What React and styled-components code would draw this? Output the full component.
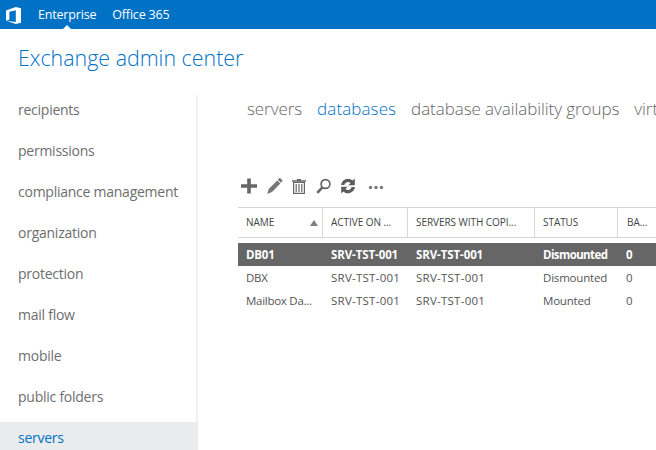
import React from 'react';
import styled, { createGlobalStyle } from 'styled-components';

const Global = createGlobalStyle`
  html, body { margin: 0; padding: 0; height: 100%; overflow: hidden; background: #fff; }
  body { font-family: "Open Sans", "Noto Sans", "Liberation Sans", sans-serif; }
`;

const Page = styled.div`
  width: 656px;
  height: 450px;
  overflow: hidden;
  display: flex;
  flex-direction: column;
`;

const TopBar = styled.div`
  height: 29px;
  flex: none;
  background: #0072c6;
  display: flex;
  align-items: center;
  padding-left: 6px;
  color: #fff;
`;

const TopLink = styled.span`
  position: relative;
  font-size: 12.5px;
  line-height: 17px;
  letter-spacing: -0.18px;
  margin-right: 16px;
  ${(p) => p.$active && `
    &::after {
      content: "";
      position: absolute;
      left: 50%;
      bottom: -6px;
      margin-left: -4px;
      border-left: 4px solid transparent;
      border-right: 4px solid transparent;
      border-bottom: 4px solid #fff;
    }
  `}
`;

const Logo = styled.svg`
  width: 16px;
  height: 17px;
  margin-top: 1px;
  margin-right: 16px;
`;

const Title = styled.h1`
  margin: 0;
  height: 66px;
  flex: none;
  box-sizing: border-box;
  padding: 14px 0 0 18px;
  font-size: 21.4px;
  line-height: 30px;
  font-weight: 300;
  color: #0072c6;
`;

const Body = styled.div`
  flex: 1;
  display: flex;
  min-height: 0;
`;

const Sidebar = styled.nav`
  width: 198px;
  flex: none;
  box-sizing: border-box;
  border-right: 2px solid #f1f1f2;
  display: flex;
  flex-direction: column;
`;

const NavItem = styled.div`
  height: ${(p) => (p.$active ? '42px' : '41px')};
  flex: none;
  padding: 0 0 0 18px;
  margin-top: ${(p) => (p.$active ? '-1px' : '0')};
  margin-right: ${(p) => (p.$active ? '-2px' : '0')};
  background: ${(p) => (p.$active ? '#eaebed' : 'transparent')};
  color: ${(p) => (p.$active ? '#0072c6' : '#6e6e6e')};
  font-size: 14px;
  line-height: ${(p) => (p.$active ? '32px' : '30px')};
  letter-spacing: -0.25px;
`;

const Main = styled.div`
  flex: 1;
  min-width: 0;
  overflow: hidden;
`;

const Tabs = styled.div`
  display: flex;
  gap: 15px;
  padding: 0 0 0 49px;
  height: 78px;
  white-space: nowrap;
`;

const Tab = styled.span`
  font-size: 17px;
  font-weight: 300;
  line-height: 28px;
  letter-spacing: ${(p) => (p.$active ? '0.1px' : '-0.07px')};
  color: ${(p) => (p.$active ? '#0072c6' : '#666')};
`;

const Toolbar = styled.div`
  display: flex;
  align-items: center;
  gap: 9.5px;
  height: 26px;
  padding-left: 43px;
`;

const IconBtn = styled.svg`
  width: ${(p) => p.$w || 16}px;
  height: 18px;
  margin-right: ${(p) => p.$after || 0}px;
  flex: none;
  display: block;
`;

const Table = styled.div`
  margin: 8px 0 0 40px;
  width: 430px;
`;

const columns = '85px 85px 127px 83px 1fr';

const HeadRow = styled.div`
  display: grid;
  grid-template-columns: ${columns};
  height: 31px;
  box-sizing: border-box;
  border-top: 1px solid #d6d6d6;
  border-bottom: 1px solid #d6d6d6;
  margin-bottom: 5px;
  align-items: stretch;
`;

const HeadCell = styled.div`
  position: relative;
  box-sizing: border-box;
  padding-left: 8px;
  font-size: 10px;
  line-height: 28px;
  letter-spacing: -0.05px;
  color: #444;
  white-space: nowrap;
  overflow: hidden;
  border-right: 1px solid #d6d6d6;
  &:last-child { border-right: 0; padding-left: 9px; }
`;

const SortArrow = styled.span`
  position: absolute;
  right: 4px;
  top: 12px;
  border-left: 4px solid transparent;
  border-right: 4px solid transparent;
  border-bottom: 6px solid #7a7f7a;
`;

const Row = styled.div`
  display: grid;
  grid-template-columns: ${columns};
  height: 23px;
  align-items: center;
  background: ${(p) => (p.$selected ? '#666' : 'transparent')};
  color: ${(p) => (p.$selected ? '#fff' : '#555')};
  font-weight: ${(p) => (p.$selected ? 700 : 400)};
`;

const Cell = styled.div`
  padding-left: 8px;
  font-size: 11.5px;
  letter-spacing: ${(p) => p.$track || '-0.2px'};
  white-space: nowrap;
  overflow: hidden;
`;

const navItems = ['recipients', 'permissions', 'compliance management', 'organization', 'protection', 'mail flow', 'mobile', 'public folders'];

const rows = [
  { name: 'DB01', active: 'SRV-TST-001', servers: 'SRV-TST-001', status: 'Dismounted', bad: '0', selected: true },
  { name: 'DBX', active: 'SRV-TST-001', servers: 'SRV-TST-001', status: 'Dismounted', bad: '0' },
  { name: 'Mailbox Da...', active: 'SRV-TST-001', servers: 'SRV-TST-001', status: 'Mounted', bad: '0' },
];

export default function App() {
  return (
    <Page>
      <Global />
      <TopBar>
        <Logo viewBox="0 0 16 17">
          <path fill="#fff" d="M0 3.400 9.800 0 15 1.300v14.500L9.800 17 0 13.800l9.800 1.200V3.300L3.400 4.800v7.700L0 13.800z" />
        </Logo>
        <TopLink $active>Enterprise</TopLink>
        <TopLink>Office 365</TopLink>
      </TopBar>
      <Title>Exchange admin center</Title>
      <Body>
        <Sidebar>
          {navItems.map((n) => <NavItem key={n}>{n}</NavItem>)}
          <NavItem $active>servers</NavItem>
        </Sidebar>
        <Main>
          <Tabs>
            <Tab>servers</Tab>
            <Tab $active>databases</Tab>
            <Tab>database availability groups</Tab>
            <Tab>virtual directories</Tab>
          </Tabs>
          <Toolbar>
            <IconBtn viewBox="0 0 16 18"><path fill="#666" d="M6.200 1.500h3.600v5.700H16v3.600H9.800v5.700H6.200v-5.700H0V7.200h6.200z" /></IconBtn>
            <IconBtn viewBox="0 0 16 18"><path fill="#777" d="M12.800 0.800l3 3-2 2-3-3zM10.200 3.400l3.200 3.200-8.400 8.500L0.300 17l1.400-5z" /></IconBtn>
            <IconBtn $w={14} viewBox="0 0 14 18">
              <path fill="#666" d="M5 2h4v1.300h5v1.400H0V3.300h5z" />
              <path fill="none" stroke="#666" strokeWidth="1.200" d="M1.600 5.500h10.800v10.900H1.600zM4.200 7v8M7 7v8M9.800 7v8" />
            </IconBtn>
            <IconBtn $w={15} viewBox="0 0 15 18">
              <circle cx="9.500" cy="7" r="4.400" fill="none" stroke="#666" strokeWidth="1.700" />
              <path fill="none" stroke="#666" strokeWidth="2.600" d="M6.300 10.300 1.300 15.800" />
            </IconBtn>
            <IconBtn $after={2} viewBox="0 0 16 18">
              <path fill="#5c5c5c" d="M8 1.800a7 7 0 0 1 4.700 1.800L14.800 1.500v6.700H8.400l2.100-2.100A3.800 3.800 0 0 0 4.300 8H1.100A7 7 0 0 1 8 1.800zM1.200 9.800h6.400l-2.100 2.100a3.800 3.800 0 0 0 6.200-1.900h3.200a7 7 0 0 1-11.600 4.400L1.200 16.500z" />
            </IconBtn>
            <IconBtn viewBox="0 0 16 18">
              <circle cx="2.500" cy="10.500" r="1.700" fill="#777" /><circle cx="8" cy="10.500" r="1.700" fill="#777" /><circle cx="13.500" cy="10.500" r="1.700" fill="#777" />
            </IconBtn>
          </Toolbar>
          <Table>
            <HeadRow>
              <HeadCell>NAME<SortArrow /></HeadCell>
              <HeadCell>ACTIVE ON ...</HeadCell>
              <HeadCell>SERVERS WITH COPI...</HeadCell>
              <HeadCell>STATUS</HeadCell>
              <HeadCell>BA...</HeadCell>
            </HeadRow>
            {rows.map((r) => (
              <Row key={r.name} $selected={r.selected}>
                <Cell $track={r.selected ? '-0.2px' : '-0.27px'}>{r.name}</Cell>
                <Cell $track={r.selected ? '-0.1px' : '0.25px'}>{r.active}</Cell>
                <Cell $track={r.selected ? '-0.1px' : '0.25px'}>{r.servers}</Cell>
                <Cell $track={r.selected ? '-0.6px' : '-0.2px'}>{r.status}</Cell>
                <Cell>{r.bad}</Cell>
              </Row>
            ))}
          </Table>
        </Main>
      </Body>
    </Page>
  );
}
